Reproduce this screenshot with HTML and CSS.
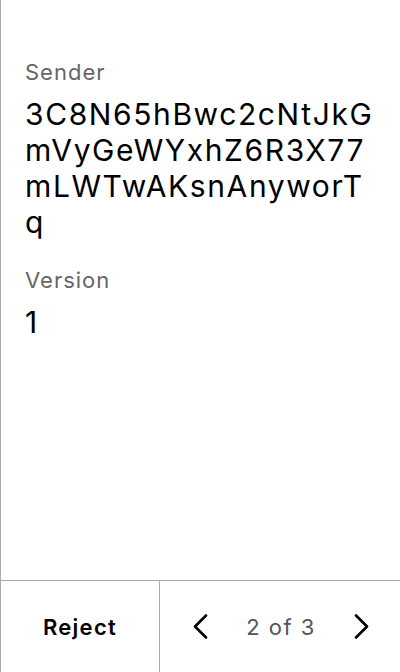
FILE: index.html
```html
<!DOCTYPE html>
<html>
<head>
<meta charset="utf-8">
<link rel="stylesheet" href="styles.css">
</head>
<body>
<div class="screen">
  <main class="content">
    <div class="field">
      <div class="label">Sender</div>
      <div class="value break">3C8N65hBwc2cNtJkGmVyGeWYxhZ6R3X77mLWTwAKsnAnyworTq</div>
    </div>
    <div class="field">
      <div class="label">Version</div>
      <div class="value">1</div>
    </div>
  </main>
  <footer class="footer">
    <button class="reject">Reject</button>
    <div class="pager">
      <button class="nav" aria-label="Previous">
        <svg width="15" height="25" viewBox="0 0 15 25"><path d="M13 1.5 L2 12.5 L13 23.5" fill="none" stroke="#000" stroke-width="2.6" stroke-linecap="round" stroke-linejoin="round"/></svg>
      </button>
      <span class="count">2 of 3</span>
      <button class="nav" aria-label="Next">
        <svg width="15" height="25" viewBox="0 0 15 25"><path d="M2 1.5 L13 12.5 L2 23.5" fill="none" stroke="#000" stroke-width="2.6" stroke-linecap="round" stroke-linejoin="round"/></svg>
      </button>
    </div>
  </footer>
</div>
</body>
</html>
```
FILE: styles.css
```css
* { box-sizing: border-box; }
html, body { margin: 0; padding: 0; background: #fff; }
body {
  font-family: Inter, "Noto Sans", sans-serif;
  color: #000;
}
.screen {
  width: 400px;
  height: 672px;
  border-left: 1px solid #aaa;
  display: flex;
  flex-direction: column;
}
.content {
  flex: 1;
  padding: 56px 24px 0 24px;
  display: flex;
  flex-direction: column;
  gap: 24px;
}
.label {
  font-size: 22px;
  line-height: 32px;
  letter-spacing: 1px;
  color: #666;
}
.value {
  font-size: 30px;
  line-height: 36px;
  letter-spacing: 1.6px;
  margin-top: 8px;
}
.break { word-break: break-all; }
.footer {
  height: 92px;
  border-top: 1px solid #aaa;
  display: flex;
}
.reject {
  width: 159px;
  border: 0;
  border-right: 1px solid #aaa;
  background: none;
  font-family: inherit;
  font-size: 22px;
  font-weight: 600;
  letter-spacing: 1.3px;
  color: #000;
  padding: 0;
}
.pager {
  flex: 1;
  display: flex;
  align-items: center;
  justify-content: space-between;
  padding: 0 31px 0 33px;
}
.nav {
  border: 0;
  background: none;
  padding: 0;
  display: flex;
}
.count {
  font-size: 22px;
  letter-spacing: 1.5px;
  color: #555;
}
```
